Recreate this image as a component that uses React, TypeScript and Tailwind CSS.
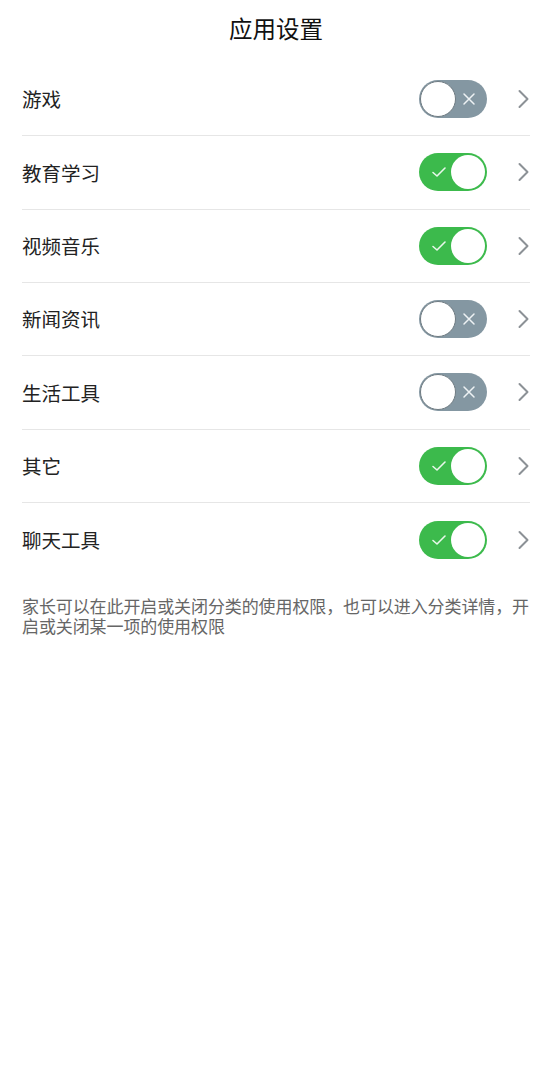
import React from "react";

const items: { label: string; on: boolean }[] = [
  { label: "游戏", on: false },
  { label: "教育学习", on: true },
  { label: "视频音乐", on: true },
  { label: "新闻资讯", on: false },
  { label: "生活工具", on: false },
  { label: "其它", on: true },
  { label: "聊天工具", on: true },
];

function Toggle({ on }: { on: boolean }) {
  if (on) {
    return (
      <div className="w-[68px] h-[38px] rounded-full bg-[#3cba4c] flex items-center justify-between pl-[12px] pr-[2px]">
        <svg width="16" height="12" viewBox="0 0 16 12" fill="none">
          <path d="M2 6.5 L6 10 L14 2" stroke="#e9f7eb" strokeWidth="1.6" strokeLinecap="round" strokeLinejoin="round" />
        </svg>
        <div className="w-[34px] h-[34px] rounded-full bg-white" />
      </div>
    );
  }
  return (
    <div className="w-[68px] h-[38px] rounded-full bg-[#8497a2] flex items-center justify-between pl-[1px] pr-[11px]">
      <div className="w-[36px] h-[36px] rounded-full bg-white border-[1.5px] border-[#6f7b82]" />
      <svg width="14" height="14" viewBox="0 0 14 14" fill="none">
        <path d="M2 2 L12 12 M12 2 L2 12" stroke="#eef2f4" strokeWidth="1.5" strokeLinecap="round" />
      </svg>
    </div>
  );
}

export default function App() {
  return (
    <div
      className="w-[552px] min-h-[1092px] bg-white"
      style={{ fontFamily: '"Noto Sans CJK SC", "Noto Sans", sans-serif' }}
    >
      <div className="h-[58px] flex items-center justify-center">
        <span className="text-[23.5px] text-[#111] leading-none">应用设置</span>
      </div>
      <div className="mx-[22px] mt-[5px]">
        {items.map((it, i) => (
          <div
            key={it.label}
            className={`h-[73.33px] flex items-center ${i < items.length - 1 ? "border-b border-[#e6e6e6]" : ""}`}
          >
            <span className="flex-1 text-[19.5px] text-[#222] leading-none">{it.label}</span>
            <Toggle on={it.on} />
            <svg className="ml-[30px]" width="13" height="20" viewBox="0 0 13 20" fill="none">
              <path d="M2.5 2 L10.5 10 L2.5 18" stroke="#8c9196" strokeWidth="2" strokeLinecap="round" strokeLinejoin="round" />
            </svg>
          </div>
        ))}
      </div>
      <p className="ml-[22px] mr-[14px] mt-[20px] text-[17px] leading-[20px] tracking-[-0.1px] text-[#666]">
        家长可以在此开启或关闭分类的使用权限，也可以进入分类详情，开启或关闭某一项的使用权限
      </p>
    </div>
  );
}
